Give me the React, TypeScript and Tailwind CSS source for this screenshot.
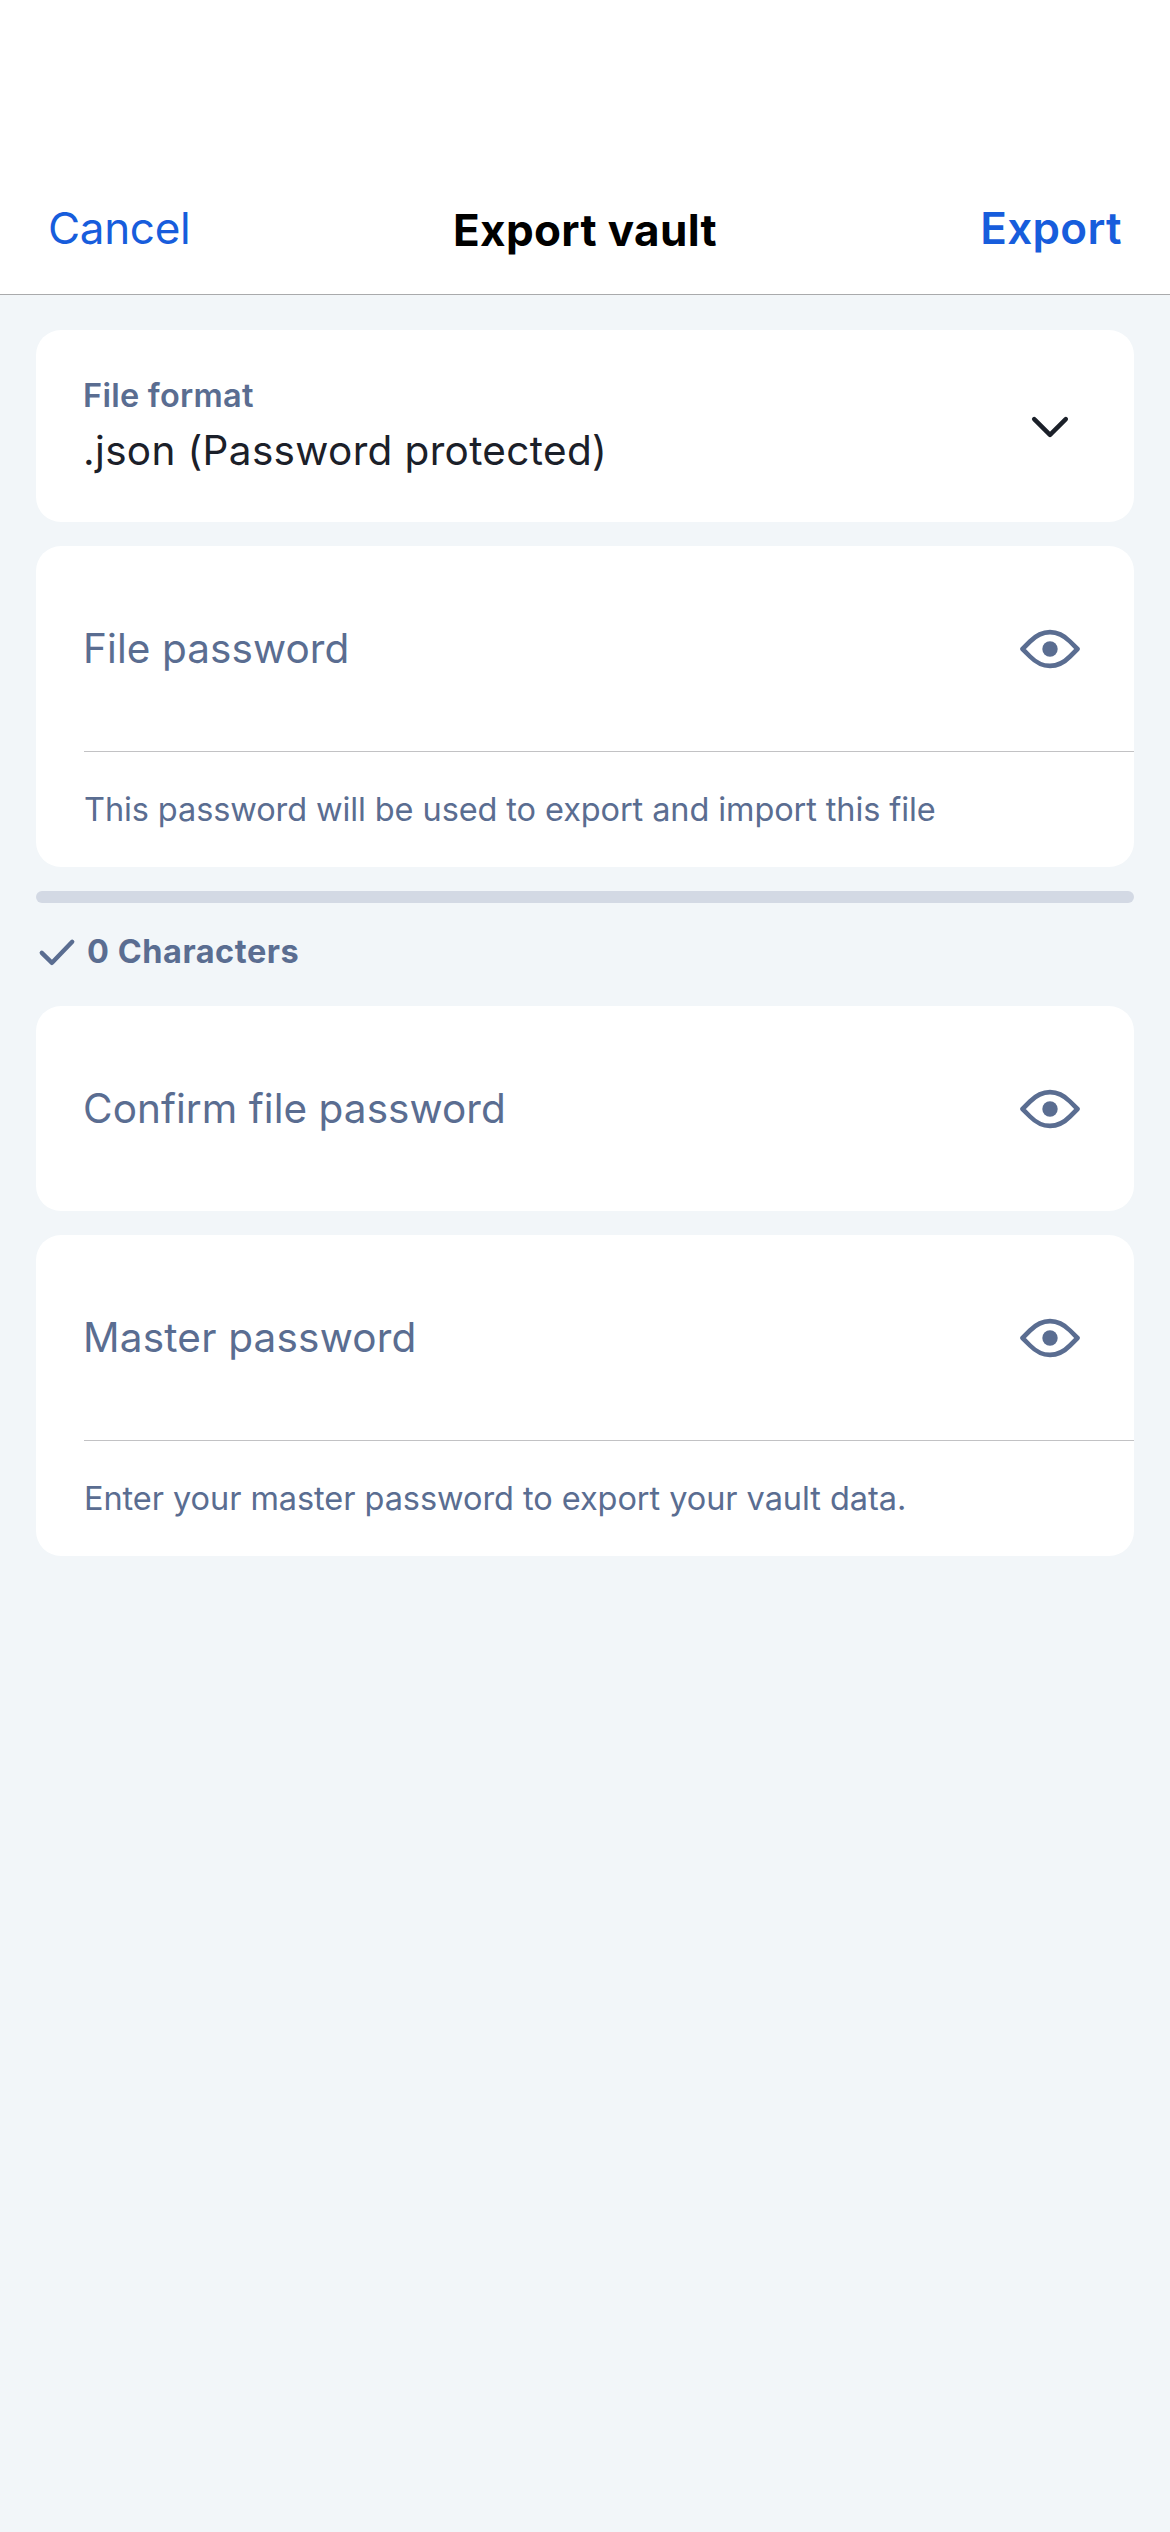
import type { ReactNode } from "react";

function EyeIcon() {
  return (
    <svg viewBox="0 0 60 60" className="size-[60px]" fill="none" aria-hidden="true">
      <path
        d="M2.5 30 L10 22.5 C22.3 10 37.7 10 50 22.5 L57.5 30 L50 37.5 C37.7 50 22.3 50 10 37.5 Z"
        stroke="currentColor"
        strokeWidth="4.6"
        strokeLinejoin="round"
      />
      <circle cx="30" cy="30" r="7.7" fill="currentColor" />
    </svg>
  );
}

function ChevronIcon() {
  return (
    <svg viewBox="0 0 48 48" className="size-12 text-[#1b2029]" fill="none" aria-hidden="true">
      <path
        d="M8.2 17.2 L24 32.8 L39.8 17.2"
        stroke="currentColor"
        strokeWidth="4.5"
        strokeLinecap="round"
        strokeLinejoin="round"
      />
    </svg>
  );
}

function CheckIcon() {
  return (
    <svg viewBox="0 0 40 48" className="h-12 w-10" fill="none" aria-hidden="true">
      <path
        d="M5.8 25.9 L16 35.8 L36.2 14.8"
        stroke="currentColor"
        strokeWidth="4.4"
        strokeLinecap="round"
        strokeLinejoin="round"
      />
    </svg>
  );
}

function Card({ children }: { children: ReactNode }) {
  return <section className="overflow-hidden rounded-[25px] bg-white">{children}</section>;
}

function PasswordField({ label, footer }: { label: ReactNode; footer?: ReactNode }) {
  return (
    <Card>
      <div className="flex h-[205px] items-center justify-between pr-[54px] pl-[47px]">
        <div className="pt-0.5">{label}</div>
        <button type="button" aria-label="Toggle visibility">
          <EyeIcon />
        </button>
      </div>
      {footer && (
        <div className="ml-12 flex h-[116px] items-center border-t border-[#c2c2c4] pt-0.5 text-[32.5px]">
          {footer}
        </div>
      )}
    </Card>
  );
}

export default function App() {
  return (
    <div className="min-h-[2532px] w-full bg-[#f2f6f9] font-['Inter',sans-serif] whitespace-nowrap text-[#5a6d91]">
      <header className="h-[295px] border-b border-[#a9aaac] bg-white px-12 pt-[162px]">
        <div className="grid h-[132px] grid-cols-[1fr_auto_1fr] items-center text-[44px] leading-[54px] text-[#175ddc]">
          <button type="button" className="justify-self-start tracking-[-0.33px]">
            Cancel
          </button>
          <h1 className="pt-1 font-bold tracking-[0.35px] text-black">Export vault</h1>
          <button type="button" className="justify-self-end font-semibold tracking-[0.36px]">
            Export
          </button>
        </div>
      </header>

      <main className="px-9 pt-[35px]">
        <div className="flex flex-col gap-6">
          <Card>
            <div className="flex h-48 items-center justify-between pr-[60px] pl-[47px]">
              <div className="pt-px">
                <div className="text-[32.5px] leading-12 font-semibold tracking-[0.27px]">File format</div>
                <div className="text-[40.5px] leading-[62px] tracking-[0.34px] text-[#1b2029]">
                  .json (Password protected)
                </div>
              </div>
              <ChevronIcon />
            </div>
          </Card>

          <PasswordField
            label={<span className="text-[40.5px] tracking-[0.08px]">File password</span>}
            footer={
              <span className="tracking-[-0.1px]">
                This password will be used to export and import this file
              </span>
            }
          />

          <div className="h-3 rounded-full bg-[#d3d9e4]" />
        </div>

        <div className="mb-[7px] flex h-24 items-center gap-[11px]">
          <CheckIcon />
          <span className="pt-0.5 text-[32.5px] font-bold tracking-[0.53px]">0 Characters</span>
        </div>

        <div className="flex flex-col gap-6">
          <PasswordField
            label={<span className="text-[40.5px] tracking-[0.05px]">Confirm file password</span>}
          />
          <PasswordField
            label={<span className="text-[40.5px] tracking-[0.2px]">Master password</span>}
            footer={
              <span className="tracking-[-0.06px]">
                Enter your master password to export your vault data.
              </span>
            }
          />
        </div>
      </main>
    </div>
  );
}
